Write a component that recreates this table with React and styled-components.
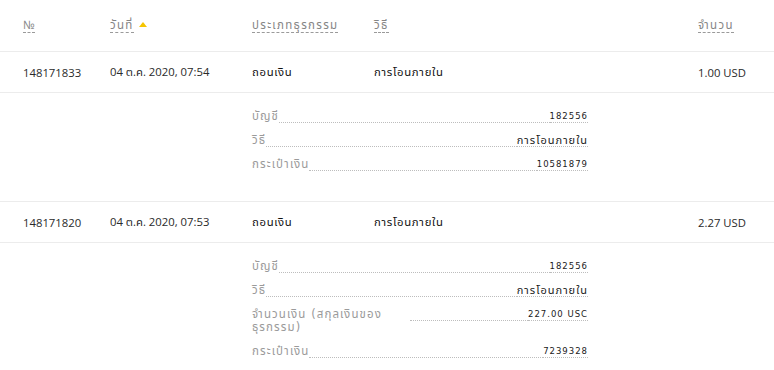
import React from "react";
import styled, { createGlobalStyle } from "styled-components";

const Global = createGlobalStyle`
  html, body { margin: 0; padding: 0; background: #fff; }
  body { font-family: "Open Sans", "Noto Sans", "Noto Sans Thai", sans-serif; }
`;

const Table = styled.div`
  width: 774px;
`;

const Row = styled.div`
  display: grid;
  grid-template-columns: 87px 142px 122px 1fr 76px;
  padding-left: 23px;
  align-items: center;
  height: ${(p) => p.$h}px;
  border-bottom: 1px solid #ececec;
  box-sizing: content-box;
`;

const HeadCell = styled.div`
  display: flex;
  align-items: center;
  gap: 5px;
  font-size: 11.5px;
  color: #858585;
`;

const HeadLabel = styled.span`
  border-bottom: 1px dashed #9a9a9a;
  line-height: 14px;
  letter-spacing: ${(p) => (p.$thai ? "1.3px" : "0")};
`;

const SortArrow = styled.span`
  width: 0;
  height: 0;
  border-left: 4px solid transparent;
  border-right: 4px solid transparent;
  border-bottom: 5px solid #f6c500;
  margin-bottom: 2px;
`;

const Cell = styled.div`
  font-size: 11.3px;
  color: ${(p) => (p.$thai ? "#111" : "#2a2a2a")};
  letter-spacing: ${(p) => (p.$thai ? "0.7px" : "0")};
  white-space: nowrap;
`;

const DetailRow = styled.div`
  display: grid;
  grid-template-columns: 87px 142px 1fr;
  padding-left: 23px;
  border-bottom: 1px solid #ececec;
`;

const Details = styled.div`
  grid-column: 3;
  width: 336px;
  display: flex;
  flex-direction: column;
  gap: 11px;
  padding: 17px 0 30px;
`;

const Item = styled.div`
  display: flex;
  align-items: flex-start;
  font-family: "DejaVu Sans", "Noto Sans Thai", sans-serif;
  line-height: 13px;
`;

const Label = styled.div`
  color: #9a9a9a;
  font-size: 11.5px;
  letter-spacing: 1.1px;
  max-width: 158px;
  flex-shrink: 0;
`;

const Leader = styled.div`
  flex: 1;
  height: 12px;
  border-bottom: 1px dotted #bdbdbd;
  min-width: 10px;
`;

const Value = styled.div`
  color: #1a1a1a;
  font-size: ${(p) => (p.$thai ? "11px" : "8.5px")};
  letter-spacing: ${(p) => (p.$thai ? "1px" : "1px")};
  white-space: nowrap;
  height: 12px;
  border-bottom: 1px dotted #bdbdbd;
`;

const rows = [
  {
    id: "148171833",
    date: "04 ต.ค. 2020, 07:54",
    amount: "1.00 USD",
    details: [
      ["บัญชี", "182556"],
      ["วิธี", "การโอนภายใน", true],
      ["กระเป๋าเงิน", "10581879"],
    ],
  },
  {
    id: "148171820",
    date: "04 ต.ค. 2020, 07:53",
    amount: "2.27 USD",
    details: [
      ["บัญชี", "182556"],
      ["วิธี", "การโอนภายใน", true],
      ["จำนวนเงิน (สกุลเงินของธุรกรรม)", "227.00 USC"],
      ["กระเป๋าเงิน", "7239328"],
    ],
  },
];

export default function App() {
  return (
    <Table>
      <Global />
      <Row $h={51}>
        <HeadCell><HeadLabel>№</HeadLabel></HeadCell>
        <HeadCell><HeadLabel $thai>วันที่</HeadLabel><SortArrow /></HeadCell>
        <HeadCell><HeadLabel $thai>ประเภทธุรกรรม</HeadLabel></HeadCell>
        <HeadCell><HeadLabel $thai>วิธี</HeadLabel></HeadCell>
        <HeadCell><HeadLabel $thai>จำนวน</HeadLabel></HeadCell>
      </Row>
      {rows.map((r) => (
        <React.Fragment key={r.id}>
          <Row $h={40}>
            <Cell>{r.id}</Cell>
            <Cell>{r.date}</Cell>
            <Cell $thai>ถอนเงิน</Cell>
            <Cell $thai>การโอนภายใน</Cell>
            <Cell>{r.amount}</Cell>
          </Row>
          <DetailRow>
            <Details>
              {r.details.map(([k, v, thai]) => (
                <Item key={k}>
                  <Label>{k}</Label>
                  <Leader />
                  <Value $thai={thai}>{v}</Value>
                </Item>
              ))}
            </Details>
          </DetailRow>
        </React.Fragment>
      ))}
    </Table>
  );
}
